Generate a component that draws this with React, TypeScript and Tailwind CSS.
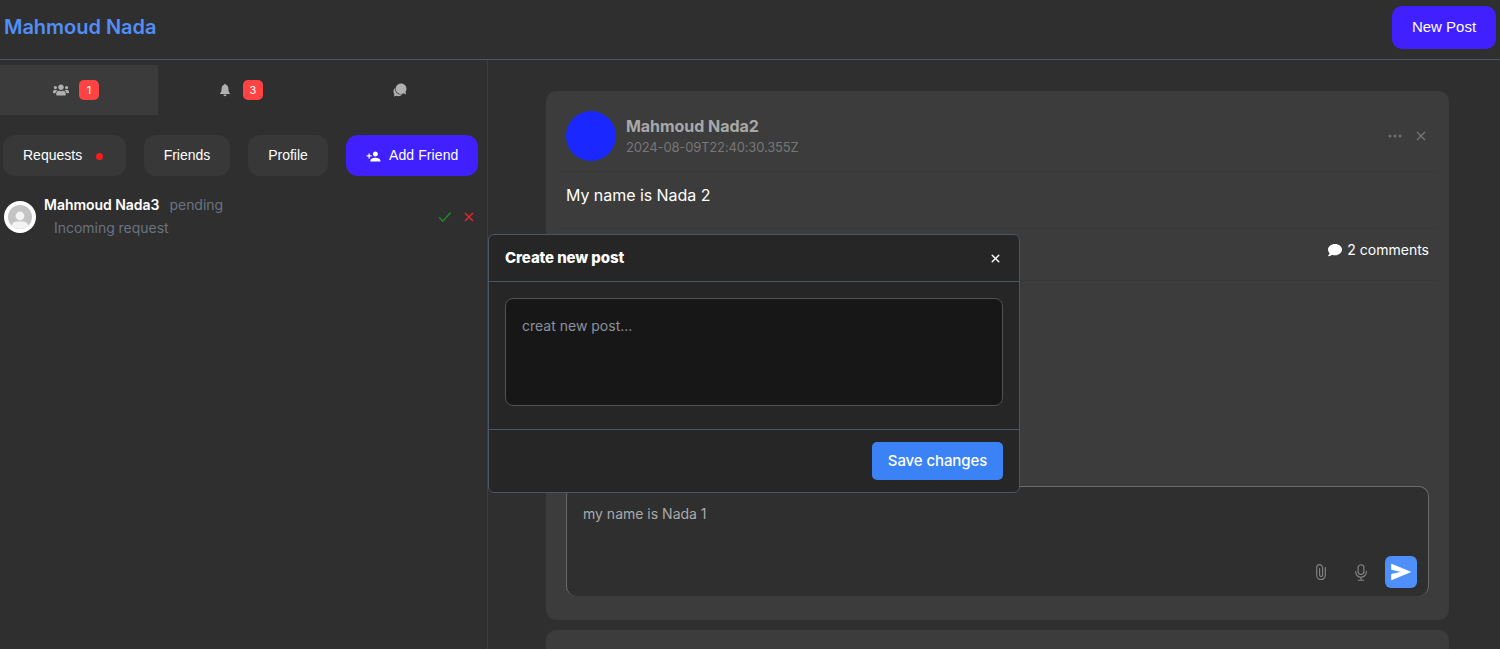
import { BsThreeDots } from "react-icons/bs";
import { FaComment, FaUsers } from "react-icons/fa";
import { IoIosChatbubbles, IoIosNotifications } from "react-icons/io";
import { IoClose } from "react-icons/io5";
import { MdPersonAdd } from "react-icons/md";

function CrossIcon({ className }: { className: string }) {
  return (
    <svg viewBox="0 0 12 12" className={className} fill="none" stroke="currentColor">
      <path d="M2 2L10 10M10 2L2 10" />
    </svg>
  );
}

function CheckIcon({ className }: { className: string }) {
  return (
    <svg viewBox="0 0 14 14" className={className} fill="none" stroke="currentColor" strokeWidth="1.4">
      <path d="M1.2 7.3L4.8 11.2L12.6 2.5" />
    </svg>
  );
}

function ClipIcon({ className }: { className: string }) {
  return (
    <svg viewBox="0 0 10 16" className={className} fill="none" stroke="currentColor" strokeWidth="1.1" strokeLinecap="round">
      <path d="M9.3 3.2V11.2A4.3 4.3 0 0 1 .7 11.2V3.6A2.95 2.95 0 0 1 6.6 3.6V11A1.5 1.5 0 0 1 3.6 11V4.4" />
    </svg>
  );
}

function MicIcon({ className }: { className: string }) {
  return (
    <svg viewBox="0 0 12 17" className={className} fill="none" stroke="currentColor" strokeWidth="1.15" strokeLinecap="round">
      <rect x="3.1" y=".7" width="5.8" height="9.8" rx="2.9" />
      <path d="M.7 7.4V8A5.3 5.3 0 0 0 11.3 8V7.4M6 13.3V16.2M3.3 16.2H8.7" />
    </svg>
  );
}

function SendIcon() {
  return (
    <svg viewBox="0 0 32 32" className="size-8" fill="currentColor" stroke="currentColor" strokeWidth=".8" strokeLinejoin="round">
      <path d="M6.6 8.2L25.4 15.9L6.6 23.8V18.3L17.5 15.9L6.6 13.4Z" />
    </svg>
  );
}

function Header() {
  return (
    <header className="flex h-[60px] shrink-0 items-start justify-between border-b border-[#4b5563] px-1">
      <h1 className="mt-[13px] text-xl leading-7 font-semibold tracking-[-0.03px] text-[#528ef8]">Mahmoud Nada</h1>
      <button className="mt-1.5 h-[43px] w-[104px] rounded-[10px] bg-[#4020ff] font-['Liberation_Sans',sans-serif] text-[15px] text-white">
        New Post
      </button>
    </header>
  );
}

function Badge({ count }: { count: number }) {
  return (
    <span className="flex size-5 items-center justify-center rounded-[5px] bg-[#ff4242] text-[11px] text-white">
      {count}
    </span>
  );
}

function Sidebar() {
  return (
    <aside className="w-[488px] shrink-0 border-r border-[#3b3b3b] pt-[5px]">
      <nav className="flex h-[50px] text-[#b0b0b0]">
        <div className="flex w-[158px] items-center gap-2.5 bg-[#3b3b3b] pl-[53px]">
          <FaUsers className="size-4" />
          <Badge count={1} />
        </div>
        <div className="flex w-[165px] items-center gap-2.5 pl-[59px]">
          <IoIosNotifications className="size-4" />
          <Badge count={3} />
        </div>
        <div className="flex flex-1 items-center pl-[69px]">
          <IoIosChatbubbles className="size-4" />
        </div>
      </nav>

      <div className="mt-5 flex gap-[18px] pl-[3px] font-['Liberation_Sans',sans-serif] text-sm text-white">
        <button className="flex h-[41px] w-[123px] items-center rounded-[12px] bg-[#383838] pb-0.5 pl-5">
          Requests
          <span className="mt-[3px] ml-3.5 size-[7px] rounded-full bg-[#fb1c1c]" />
        </button>
        <button className="h-[41px] w-[86px] rounded-[12px] bg-[#383838] pb-0.5">Friends</button>
        <button className="h-[41px] w-[80px] rounded-[12px] bg-[#383838] pb-0.5">Profile</button>
        <button className="flex h-[41px] w-[132px] items-center gap-2 rounded-[12px] bg-[#4020ff] pb-0.5 pl-5 tracking-[0.1px]">
          <MdPersonAdd className="mt-[3px] size-[15px]" />
          Add Friend
        </button>
      </div>

      <div className="mt-[17px] flex h-12 items-center pl-1">
        <span className="size-8 shrink-0 rounded-full bg-white">
          <svg viewBox="0 0 32 32" className="size-8">
            <circle cx="16" cy="16" r="12" fill="#c4c4c4" />
            <circle cx="16" cy="15" r="4.4" fill="#f4f4f4" />
            <path d="M7.8 24.7Q9 20.6 13 20.6H19Q23 20.6 24.2 24.7Q16 31.2 7.8 24.7Z" fill="#f4f4f4" />
          </svg>
        </span>
        <div className="mb-0.5 ml-2 flex-1 text-sm tracking-[-0.03px]">
          <div className="flex h-[23px] items-center gap-2.5">
            <span className="font-semibold text-white">Mahmoud Nada3</span>
            <span className="text-[#6b7280]">pending</span>
          </div>
          <div className="flex h-[23px] items-center pl-2.5 text-[#6b7280]">Incoming request</div>
        </div>
        <CheckIcon className="mr-[11px] size-3.5 text-[#218c2b]" />
        <CrossIcon className="mr-3 size-3 stroke-[1.5] text-[#e12828]" />
      </div>
    </aside>
  );
}

function Post() {
  return (
    <article className="flex h-[529px] w-[903px] shrink-0 flex-col rounded-[10px] bg-[#3c3c3c]">
      <div className="mx-2.5 flex h-[81px] shrink-0 items-center border-b border-[#383838] px-2.5 pt-2.5">
        <span className="size-[50px] rounded-full bg-[#1a28ff]" />
        <div className="ml-2.5 flex-1">
          <div className="text-base leading-[22px] font-bold tracking-[-0.05px] text-[#a8a8a8]">Mahmoud Nada2</div>
          <div className="text-[13px] leading-5 tracking-[-0.16px] text-[#777777]">2024-08-09T22:40:30.355Z</div>
        </div>
        <BsThreeDots className="mr-3 size-4 text-[#6e6e6e]" />
        <CrossIcon className="mr-0.5 size-3 stroke-[1.2] text-[#777777]" />
      </div>
      <p className="mx-2.5 h-[57px] shrink-0 border-b border-[#383838] px-2.5 pt-[11px] text-base leading-6 tracking-[-0.05px] text-white">
        My name is Nada 2
      </p>
      <div className="mx-2.5 flex h-[52px] shrink-0 items-start justify-end gap-[5px] border-b border-[#383838] px-2.5 pt-[11px] text-sm leading-5 text-white">
        <FaComment className="mt-[3px] size-3.5" />
        2 comments
      </div>
      <div className="mx-5 mt-auto mb-6 flex h-[110px] flex-col justify-between rounded-[10px] border border-b-0 border-[#6b6b6b] bg-[#2f2f2f] pt-[17px] pr-[11px] pb-2 pl-4 text-sm text-[#aaaaaa]">
        <span>my name is Nada 1</span>
        <div className="flex items-center justify-end text-[#858585]">
          <ClipIcon className="mr-[29px] h-4 w-2.5" />
          <MicIcon className="mr-[18px] h-[17px] w-3" />
          <button className="size-8 rounded-md bg-[#4f8ff9] text-white">
            <SendIcon />
          </button>
        </div>
      </div>
    </article>
  );
}

function CreatePostDialog() {
  return (
    <div
      role="dialog"
      className="absolute top-[234px] left-[488px] flex h-[259px] w-[532px] flex-col rounded-md border border-[#4b5563] bg-[#262626]"
    >
      <div className="flex h-[47px] items-center justify-between border-b border-[#4b5563] px-4 text-white">
        <h2 className="text-[15px] font-extrabold tracking-[-0.1px]">Create new post</h2>
        <IoClose className="mt-px size-[15px]" />
      </div>
      <div className="h-[148px] border-b border-[#4b5563] p-4">
        <textarea
          className="block h-[108px] w-full resize-none rounded-lg border border-[#525252] bg-[#171717] p-4 text-sm leading-[22px] outline-none placeholder:text-[#8b929e]"
          placeholder="creat new post..."
        />
      </div>
      <div className="flex flex-1 items-center justify-end pr-4">
        <button className="h-[38px] w-[131px] rounded-[5px] bg-[#3b82f6] text-[15px] font-medium tracking-[-0.1px] text-white">
          Save changes
        </button>
      </div>
    </div>
  );
}

export default function App() {
  return (
    <div className="relative flex h-[649px] w-[1500px] flex-col overflow-hidden bg-[#2f2f2f] font-['Inter',sans-serif]">
      <Header />
      <div className="flex min-h-0 flex-1">
        <Sidebar />
        <main className="flex flex-col gap-2.5 overflow-hidden pt-[31px] pl-[58px]">
          <Post />
          <article className="h-[200px] w-[903px] shrink-0 rounded-[10px] bg-[#3c3c3c]" />
        </main>
      </div>
      <CreatePostDialog />
    </div>
  );
}
